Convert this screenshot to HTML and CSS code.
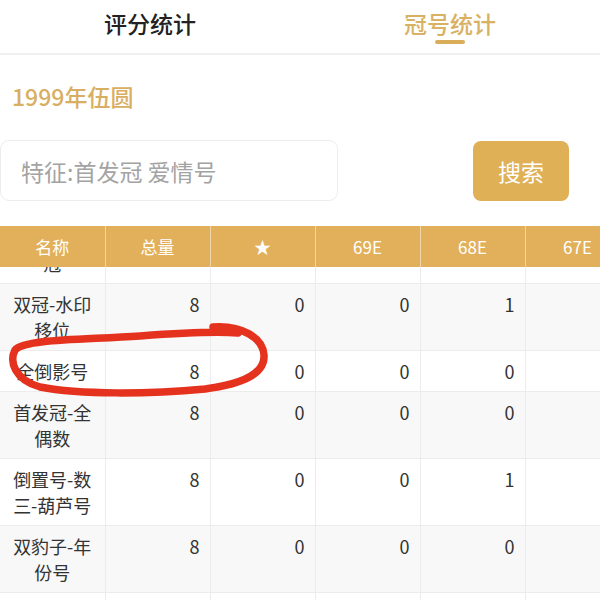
FILE: index.html
```html
<!DOCTYPE html>
<html lang="zh-CN">

<head>
  <meta charset="UTF-8" />
  <meta name="viewport" content="width=device-width, initial-scale=1.0" />
  <title>冠号统计</title>
  <link rel="stylesheet" href="styles.css">
</head>

<body>
  <div class="page">

    <div class="tabs">
      <div class="tab">评分统计</div>
      <div class="tab active">冠号统计</div>
    </div>

    <h2 class="title">1999年伍圆</h2>

    <div class="search">
      <input class="search-input" type="text" placeholder="特征:首发冠 爱情号" />
      <button class="search-btn">搜索</button>
    </div>

    <div class="grid">
      <table class="grid-head">
        <tr>
          <th>名称</th>
          <th>总量</th>
          <th>★</th>
          <th>69E</th>
          <th>68E</th>
          <th>67E</th>
          <th>66E</th>
        </tr>
      </table>

      <div class="grid-body">
        <table class="grid-rows">
          <tr>
            <td class="name">首发冠-单冠</td>
            <td>8</td><td>0</td><td>0</td><td>0</td><td></td><td></td>
          </tr>
          <tr class="odd">
            <td class="name">双冠-水印移位</td>
            <td>8</td><td>0</td><td>0</td><td>1</td><td></td><td></td>
          </tr>
          <tr>
            <td class="name">全倒影号</td>
            <td>8</td><td>0</td><td>0</td><td>0</td><td></td><td></td>
          </tr>
          <tr class="odd">
            <td class="name">首发冠-全偶数</td>
            <td>8</td><td>0</td><td>0</td><td>0</td><td></td><td></td>
          </tr>
          <tr>
            <td class="name">倒置号-数三-葫芦号</td>
            <td>8</td><td>0</td><td>0</td><td>1</td><td></td><td></td>
          </tr>
          <tr class="odd">
            <td class="name">双豹子-年份号</td>
            <td>8</td><td>0</td><td>0</td><td>0</td><td></td><td></td>
          </tr>
          <tr>
            <td class="name">对子号</td>
            <td>8</td><td>0</td><td>0</td><td>0</td><td></td><td></td>
          </tr>
        </table>
      </div>
    </div>

    <!-- 手绘红圈标注 -->
    <svg class="mark" width="600" height="600" viewBox="0 0 600 600">
      <path d="M213 327 C242 325 263 338 264 355 C265 374 243 384 205 389 C150 394 80 395 40 387 C15 380 9 362 15 350 C25 339 80 340 140 336 C180 333 212 331 238 333" />
    </svg>

  </div>
</body>

</html>
```

FILE: styles.css
```css
* {
  box-sizing: border-box;
}

html,
body {
  margin: 0;
  height: 600px;
  overflow: hidden;
  background: #fff;
  font-family: "Noto Sans CJK SC", "Noto Sans", sans-serif;
  color: #333;
}

.page {
  position: relative;
  height: 600px;
  display: flex;
  flex-direction: column;
}

/* 顶部 tab */
.tabs {
  display: flex;
  height: 55px;
  border-bottom: 2px solid #f0f0f0;
}

.tab {
  flex: 1;
  text-align: center;
  font-size: 23px;
  font-weight: 500;
  line-height: 46px;
  color: #222;
  position: relative;
}

.tab.active {
  color: #d9b163;
}

.tab.active::after {
  content: "";
  position: absolute;
  left: 50%;
  top: 40px;
  width: 30px;
  height: 4px;
  margin-left: -15px;
  border-radius: 2px;
  background: #d9ad5a;
}

.title {
  margin: 0;
  padding: 24px 0 0 12px;
  height: 85px;
  font-size: 23px;
  font-weight: 500;
  line-height: 34px;
  color: #d8ae62;
}

/* 搜索 */
.search {
  display: flex;
  justify-content: space-between;
  align-items: center;
  padding: 0 31px 0 0;
  height: 61px;
}

.search-input {
  width: 338px;
  height: 61px;
  border: 1px solid #ededed;
  border-radius: 9px;
  padding: 0 20px;
  font-family: inherit;
  font-size: 23px;
  outline: none;
}

.search-input::placeholder {
  color: #a3a3a3;
}

.search-btn {
  width: 96px;
  height: 60px;
  border: none;
  border-radius: 8px;
  background: #e0b057;
  color: #fff;
  font-family: inherit;
  font-size: 23px;
}

/* 表格 */
.grid {
  margin-top: 25px;
  flex: 1;
  display: flex;
  flex-direction: column;
  overflow: hidden;
}

.grid table {
  width: 735px;
  table-layout: fixed;
  border-collapse: collapse;
}

.grid-head th {
  width: 105px;
  height: 41px;
  background: #e2b05a;
  color: #fff;
  font-size: 17px;
  font-weight: 400;
  border-right: 1px solid #f0d6a6;
  padding: 0;
}

.grid-body {
  flex: 1;
  overflow: hidden;
}

.grid-rows {
  margin-top: -50px;
}

.grid-rows td {
  width: 105px;
  height: 40px;
  padding: 7px 10px 7px 4px;
  font-size: 18px;
  line-height: 26px;
  text-align: right;
  vertical-align: top;
  color: #333;
  border-right: 1px solid #ececec;
  border-bottom: 1px solid #ececec;
}

.grid-rows td.name {
  text-align: center;
  padding: 7px 6px;
}

.grid-rows tr.odd td {
  background: #f8f8f8;
}

/* 红圈 */
.mark {
  position: absolute;
  left: 0;
  top: 0;
  pointer-events: none;
}

.mark path {
  fill: none;
  stroke: #e4321e;
  stroke-width: 7.5;
  stroke-linecap: round;
  stroke-linejoin: round;
}
```
